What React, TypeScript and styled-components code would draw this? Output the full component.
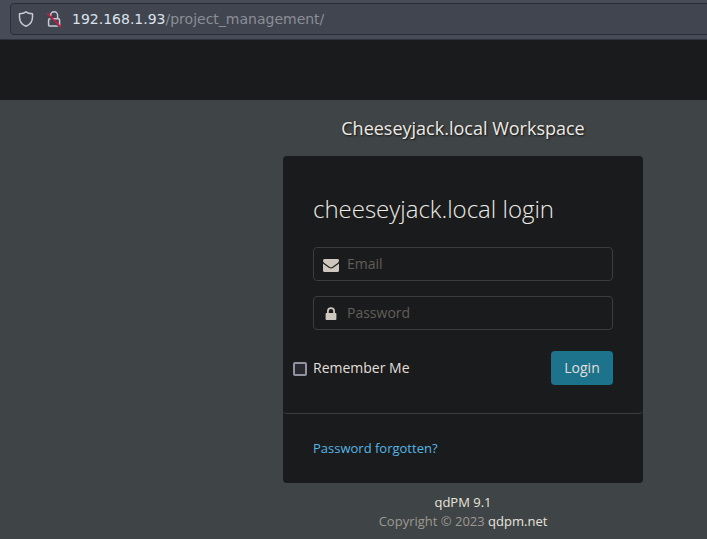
import React from "react";
import styled, { createGlobalStyle } from "styled-components";

const GlobalStyle = createGlobalStyle`
  * { box-sizing: border-box; }
  html, body { margin: 0; height: 539px; overflow: hidden; background: #3f4446; }
  body { font-family: "Open Sans", sans-serif; font-size: 14px; color: #e2dfda; }
`;

const Window = styled.div`
  width: 707px;
  height: 539px;
  overflow: hidden;
`;

const Page = styled.div`
  width: 926px;
  display: flex;
  flex-direction: column;
`;

const BrowserBar = styled.div`
  height: 40px;
  padding: 3px 0 0 10px;
  background: #474b57;
  border-bottom: 1px solid #2c3441;
`;

const AddressField = styled.div`
  height: 32px;
  display: flex;
  align-items: center;
  padding-left: 7px;
  background: #414550;
  border: 1px solid #2a2d37;
  border-radius: 4px;
  font: 14px/20px "DejaVu Sans", sans-serif;
`;

const ShieldIcon = styled.svg`
  width: 16px;
  height: 18px;
  margin-right: 12px;
`;

const InsecureIcon = styled.svg`
  width: 16px;
  height: 18px;
  margin-right: 10px;
`;

const Host = styled.span`
  color: #dce1ea;
`;

const Path = styled.span`
  color: #8b8e97;
`;

const Header = styled.header`
  height: 60px;
  background: #1a1b1c;
`;

const Main = styled.main`
  width: 360px;
  align-self: center;
`;

const Workspace = styled.div`
  height: 56px;
  line-height: 57px;
  text-align: center;
  font-size: 18px;
  color: #eeeae4;
  text-shadow: 1px 1px 2px rgba(0, 0, 0, 0.75);
`;

const Card = styled.div`
  height: 327px;
  background: #1a1b1c;
  border-radius: 4px;
`;

const LoginForm = styled.form`
  height: 258px;
  padding: 36px 30px 0;
  border-bottom: 1px solid #3b3d3e;
  border-radius: 4px;
`;

const Title = styled.h3`
  margin: 0 0 22px;
  height: 33px;
  font-size: 24px;
  line-height: 33px;
  font-weight: 300;
  color: #eeeae4;
`;

const Field = styled.label`
  display: flex;
  align-items: center;
  height: 34px;
  margin-bottom: 15px;
  padding-left: 9px;
  border: 1px solid #3b3d3e;
  border-radius: 4px;
`;

const FieldIcon = styled.svg`
  width: 16px;
  height: 16px;
  margin: 2px 8px 0 0;
  fill: #cdc7be;
`;

const Input = styled.input`
  flex: 1;
  min-width: 0;
  padding: 0;
  border: 0;
  outline: 0;
  background: transparent;
  color: #e2dfda;
  font: 14px/20px "Open Sans", sans-serif;
  &::placeholder { color: #625e59; opacity: 1; }
`;

const Actions = styled.div`
  display: flex;
  align-items: flex-start;
  justify-content: space-between;
  height: 34px;
  margin: 21px 0 0 -20px;
`;

const Remember = styled.label`
  display: flex;
  align-items: flex-start;
  padding-top: 7px;
  line-height: 20px;
`;

const Checkbox = styled.input`
  appearance: none;
  width: 14px;
  height: 14px;
  margin: 4px 6px 0 0;
  background: #2a2932;
  border: 2px solid #9492a0;
  border-radius: 2px;
`;

const LoginButton = styled.button`
  width: 62px;
  height: 34px;
  padding: 0;
  border: 0;
  border-radius: 4px;
  background: #1d728c;
  color: #e2dfda;
  font: 14px/20px "Open Sans", sans-serif;
`;

const Recovery = styled.div`
  padding: 24px 30px 0;
  font-size: 13px;
  line-height: 20px;
`;

const RecoveryLink = styled.a`
  color: #57b6e6;
`;

const Footer = styled.footer`
  padding-top: 10px;
  text-align: center;
  font-size: 13px;
  line-height: 19px;
  color: #9d9991;
`;

const FooterLink = styled.a`
  color: #e9e4dc;
`;

export default function App() {
  return (
    <Window>
      <GlobalStyle />
      <Page>
        <BrowserBar>
          <AddressField>
            <ShieldIcon viewBox="0 0 16 18" fill="none" stroke="#c5cad5" strokeWidth="1.5" strokeLinejoin="round">
              <path d="M8 1.8C6.4 3 4 3.6 1.5 3.8V7C1.5 11.4 4.2 14.9 8 16.3C11.8 14.9 14.5 11.4 14.5 7V3.8C12 3.6 9.6 3 8 1.8Z" />
            </ShieldIcon>
            <InsecureIcon viewBox="0 0 16 18" fill="none" stroke="#c5cad5" strokeWidth="1.5">
              <path d="M4.6 6V5.2a3.5 3.5 0 0 1 7 0V8.5" />
              <rect x="2.6" y="8.7" width="11" height="7.4" rx="1.2" />
              <path d="M2 5.2L13.6 17" stroke="#414550" strokeWidth="1.4" />
              <path d="M1.2 3.2L14.9 17" stroke="#e2143e" strokeWidth="1.5" />
            </InsecureIcon>
            <Host>192.168.1.93</Host>
            <Path>/project_management/</Path>
          </AddressField>
        </BrowserBar>
        <Header />
        <Main>
          <Workspace>Cheeseyjack.local Workspace</Workspace>
          <Card>
            <LoginForm>
              <Title>cheeseyjack.local login</Title>
              <Field>
                <FieldIcon viewBox="0 0 16 16">
                  <path d="M0 3.7Q0 2 1.5 2H14.5Q16 2 16 3.4C16 4.8 15 5.9 14 6.6L9.6 9.8Q8 11 6.4 9.8L2 6.6C1 5.9 0 4.8 0 3.7ZM0 6.5Q.5 7.1 1.3 7.6L5.8 10.8Q8 12.4 10.2 10.8L14.7 7.6Q15.5 7.1 16 6.5V13.5Q16 15 14.5 15H1.5Q0 15 0 13.5Z" />
                </FieldIcon>
                <Input type="email" placeholder="Email" />
              </Field>
              <Field>
                <FieldIcon viewBox="0 0 16 16">
                  <path
                    fillRule="evenodd"
                    d="M4 7V5.2a4 4 0 0 1 8 0V7H12.6Q13.4 7 13.4 7.9V13.1Q13.4 14 12.5 14H3.5Q2.6 14 2.6 13.1V7.9Q2.6 7 3.4 7ZM5.8 7H10.2V5.1a2.2 2.2 0 0 0-4.4 0Z"
                  />
                </FieldIcon>
                <Input type="password" placeholder="Password" />
              </Field>
              <Actions>
                <Remember>
                  <Checkbox type="checkbox" />
                  Remember Me
                </Remember>
                <LoginButton type="button">Login</LoginButton>
              </Actions>
            </LoginForm>
            <Recovery>
              <RecoveryLink>Password forgotten?</RecoveryLink>
            </Recovery>
          </Card>
          <Footer>
            <div>
              <FooterLink>qdPM 9.1</FooterLink>
            </div>
            <div>
              Copyright © 2023 <FooterLink>qdpm.net</FooterLink>
            </div>
          </Footer>
        </Main>
      </Page>
    </Window>
  );
}
